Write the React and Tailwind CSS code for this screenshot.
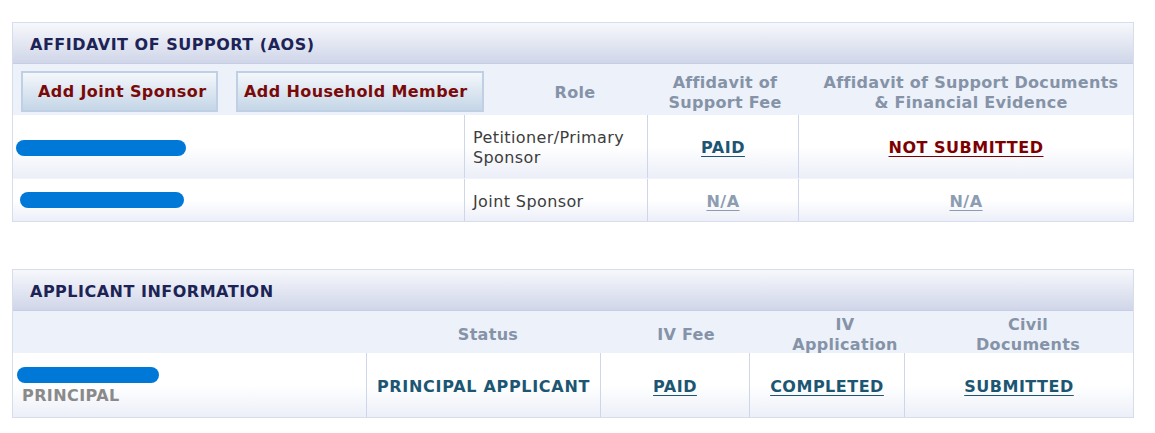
import React from 'react';

const font = { fontFamily: '"DejaVu Sans", Verdana, sans-serif' };

const Redact = ({ className = '' }) => (
  <div className={`h-[16px] rounded-full bg-[#0078d7] ${className}`} />
);

const PanelHeader = ({ title }) => (
  <div className="h-[41px] flex items-center pl-[17px] pt-[3px] bg-gradient-to-b from-[#f7f8fc] to-[#d0d6e9] border-b border-[#c6cee3]">
    <h3 className="text-[16px] font-bold text-[#1d2455] tracking-[0.5px]">{title}</h3>
  </div>
);

const ColHead = ({ children, className = '' }) => (
  <div className={`flex items-center justify-center text-center text-[16px] leading-[20px] font-bold tracking-[0.3px] text-[#8593a8] ${className}`}>
    {children}
  </div>
);

const rowBg = 'bg-gradient-to-b from-white from-50% to-[#eceff8]';

const Cell = ({ children, className = '' }) => (
  <div className={`flex items-center pt-[3px] border-l border-[#cfd6ea] ${className}`}>{children}</div>
);

const LinkText = ({ children, color }) => (
  <a href="#" className={`text-[16px] font-bold tracking-[0.5px] underline underline-offset-[3px] ${color}`}>
    {children}
  </a>
);

const AddButton = ({ children, className = '' }) => (
  <button className={`h-[41px] text-left border-2 border-[#c0d0e4] bg-gradient-to-b from-[#f4f7fb] to-[#c5d6e7] text-[16px] font-bold tracking-[0.4px] text-[#7a0a0a] ${className}`}>
    {children}
  </button>
);

export default function App() {
  return (
    <div className="bg-white w-[1155px] h-[433px] pt-[22px]" style={font}>
      {/* Affidavit of support */}
      <div className="ml-[12px] w-[1122px] border border-[#d7ddec]">
        <PanelHeader title="AFFIDAVIT OF SUPPORT (AOS)" />
        <div className="grid grid-cols-[496px_132px_168px_324px] h-[51px] bg-[#edf1f9]">
          <div className="flex items-center gap-[18px] pl-[8px] pt-[4px]">
            <AddButton className="w-[197px] pl-[15px]">Add Joint Sponsor</AddButton>
            <AddButton className="w-[248px] pl-[6px]">Add Household Member</AddButton>
          </div>
          <ColHead className="pt-[6px]">Role</ColHead>
          <ColHead className="pt-[7px]">
            Affidavit of
            <br />
            Support Fee
          </ColHead>
          <ColHead className="pt-[7px]">
            Affidavit of Support Documents
            <br />
            &amp; Financial Evidence
          </ColHead>
        </div>
        <div className={`grid grid-cols-[451px_183px_151px_335px] h-[63px] ${rowBg}`}>
          <div className="flex items-center pl-[3px] pt-[3px]">
            <Redact className="w-[170px]" />
          </div>
          <Cell className="pl-[8px] text-[16px] leading-[20px] tracking-[0.4px] text-[#3d3d3d]">
            Petitioner/Primary
            <br />
            Sponsor
          </Cell>
          <Cell className="justify-center">
            <LinkText color="text-[#1c5672]">PAID</LinkText>
          </Cell>
          <Cell className="justify-center">
            <LinkText color="text-[#7d0000]">NOT SUBMITTED</LinkText>
          </Cell>
        </div>
        <div className={`grid grid-cols-[451px_183px_151px_335px] h-[43px] border-t border-[#f3f4f9] ${rowBg}`}>
          <div className="flex items-center pl-[7px]">
            <Redact className="w-[164px]" />
          </div>
          <Cell className="pl-[8px] text-[16px] tracking-[0.4px] text-[#3d3d3d]">Joint Sponsor</Cell>
          <Cell className="justify-center">
            <LinkText color="text-[#8c9cb1]">N/A</LinkText>
          </Cell>
          <Cell className="justify-center">
            <LinkText color="text-[#8c9cb1]">N/A</LinkText>
          </Cell>
        </div>
      </div>

      {/* Applicant information */}
      <div className="ml-[12px] mt-[47px] w-[1122px] border border-[#d7ddec]">
        <PanelHeader title="APPLICANT INFORMATION" />
        <div className="grid grid-cols-[358px_234px_162px_156px_210px] h-[42px] bg-[#edf1f9]">
          <div />
          <ColHead className="pt-[4px]">Status</ColHead>
          <ColHead className="pt-[4px]">IV Fee</ColHead>
          <ColHead className="pt-[4px]">
            IV
            <br />
            Application
          </ColHead>
          <ColHead className="pt-[4px]">
            Civil
            <br />
            Documents
          </ColHead>
        </div>
        <div className={`grid grid-cols-[353px_234px_149px_155px_229px] h-[64px] ${rowBg}`}>
          <div className="flex flex-col justify-center pl-[4px] pt-[2px]">
            <Redact className="w-[142px] h-[14px]" />
            <span className="pl-[5px] mt-[4px] text-[16px] leading-[18px] font-bold tracking-[0.4px] text-[#8a8a8a]">PRINCIPAL</span>
          </div>
          <Cell className="justify-center text-[16px] font-bold tracking-[0.7px] text-[#1c5672]">PRINCIPAL APPLICANT</Cell>
          <Cell className="justify-center">
            <LinkText color="text-[#1c5672]">PAID</LinkText>
          </Cell>
          <Cell className="justify-center">
            <LinkText color="text-[#1c5672]">COMPLETED</LinkText>
          </Cell>
          <Cell className="justify-center">
            <LinkText color="text-[#1c5672]">SUBMITTED</LinkText>
          </Cell>
        </div>
      </div>
    </div>
  );
}
